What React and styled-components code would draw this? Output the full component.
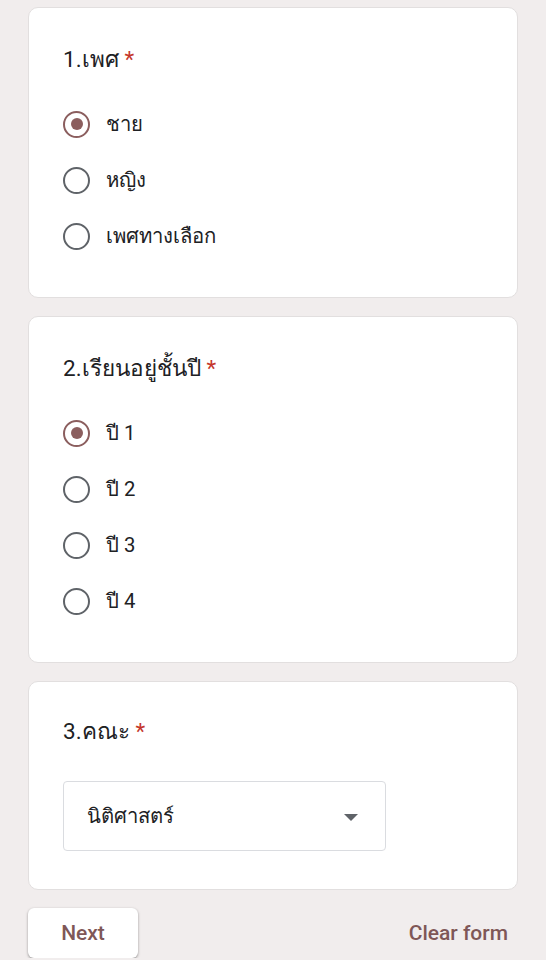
import styled, { createGlobalStyle } from "styled-components";

const GlobalStyle = createGlobalStyle`
  html, body {
    margin: 0;
    padding: 0;
    background: #f1eded;
  }
  body {
    font-family: Roboto, "Noto Sans", "Liberation Sans", sans-serif;
    color: #202124;
  }
`;

const Page = styled.div`
  display: flex;
  flex-direction: column;
  gap: 18px;
  padding: 7px 28px 0 28px;
  width: 490px;
`;

const Card = styled.section`
  background: #fff;
  border: 1px solid #e2dfdf;
  border-radius: 10px;
  padding: ${(p) => p.$pad || "36px 34px 44px 34px"};
`;

const Title = styled.h2`
  margin: 0 0 ${(p) => p.$gap || "33px"} 0;
  font-size: 22.5px;
  font-weight: 400;
  line-height: 30px;
  color: #202124;
`;

const Star = styled.span`
  color: #c5372c;
  margin-left: 6px;
`;

const Options = styled.div`
  display: flex;
  flex-direction: column;
  gap: 22px;
`;

const Option = styled.label`
  display: flex;
  align-items: center;
  gap: 16px;
  height: 34px;
  font-size: 20.3px;
  color: #202124;
`;

const Radio = styled.span`
  box-sizing: border-box;
  width: 27px;
  height: 27px;
  border-radius: 50%;
  border: 2.5px solid ${(p) => (p.$checked ? "#8b5e5e" : "#5f6368")};
  display: flex;
  align-items: center;
  justify-content: center;
  flex-shrink: 0;
  &::after {
    content: "";
    width: 12px;
    height: 12px;
    border-radius: 50%;
    background: #8b5e5e;
    display: ${(p) => (p.$checked ? "block" : "none")};
  }
`;

const Select = styled.div`
  box-sizing: border-box;
  width: 323px;
  height: 70px;
  border: 1px solid #dadce0;
  border-radius: 4px;
  display: flex;
  align-items: center;
  justify-content: space-between;
  padding: 0 27px 0 23px;
  font-size: 20.3px;
`;

const Arrow = styled.span`
  width: 0;
  height: 0;
  border-left: 7px solid transparent;
  border-right: 7px solid transparent;
  border-top: 7px solid #5f6368;
  margin-top: 2px;
`;

const Footer = styled.div`
  display: flex;
  align-items: center;
  justify-content: space-between;
`;

const NextButton = styled.button`
  width: 110px;
  height: 50px;
  border: none;
  border-radius: 6px;
  background: #fff;
  box-shadow: 0 1px 2px rgba(0, 0, 0, 0.3), 0 1px 3px 1px rgba(0, 0, 0, 0.08);
  font-family: Roboto, "Liberation Sans", sans-serif;
  font-size: 21px;
  font-weight: 500;
  color: #7f5757;
`;

const ClearButton = styled.button`
  border: none;
  background: none;
  padding: 0 10px 0 0;
  font-family: Roboto, "Liberation Sans", sans-serif;
  font-size: 21px;
  font-weight: 500;
  color: #7f5757;
`;

const questions = [
  { title: "1.เพศ", options: ["ชาย", "หญิง", "เพศทางเลือก"], checked: 0 },
  { title: "2.เรียนอยู่ชั้นปี", options: ["ปี 1", "ปี 2", "ปี 3", "ปี 4"], checked: 0 },
];

export default function App() {
  return (
    <>
      <GlobalStyle />
      <Page>
        {questions.map((q) => (
          <Card key={q.title}>
            <Title>
              {q.title}
              <Star>*</Star>
            </Title>
            <Options>
              {q.options.map((o, i) => (
                <Option key={o}>
                  <Radio $checked={i === q.checked} />
                  {o}
                </Option>
              ))}
            </Options>
          </Card>
        ))}
        <Card $pad="34px 34px 38px 34px">
          <Title $gap="35px">
            3.คณะ
            <Star>*</Star>
          </Title>
          <Select>
            นิติศาสตร์
            <Arrow />
          </Select>
        </Card>
        <Footer>
          <NextButton>Next</NextButton>
          <ClearButton>Clear form</ClearButton>
        </Footer>
      </Page>
    </>
  );
}
